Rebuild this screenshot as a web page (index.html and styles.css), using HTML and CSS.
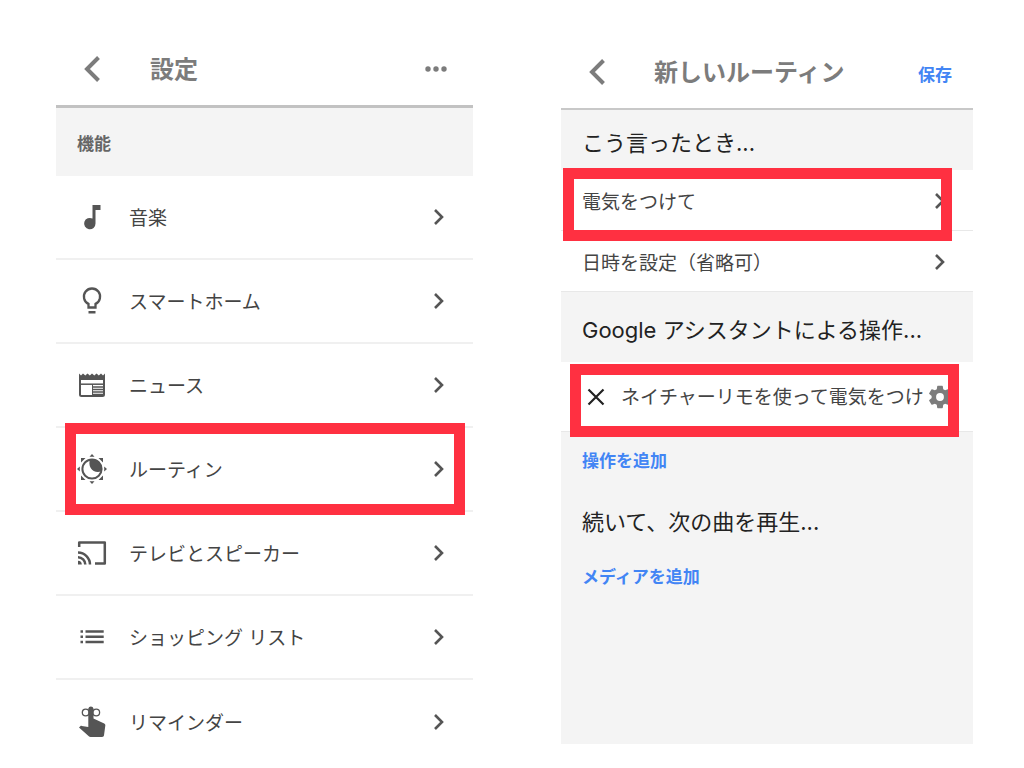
FILE: index.html
```html
<!DOCTYPE html>
<html lang="ja">
<head>
<meta charset="utf-8">
<meta name="viewport" content="width=device-width, initial-scale=1">
<title>設定</title>
<link rel="stylesheet" href="styles.css">
</head>
<body>
<svg class="defs" aria-hidden="true">
  <symbol id="back" viewBox="0 0 16 26"><path d="M14.500 1.500 3 13l11.500 11.500" fill="none" stroke="currentColor" stroke-width="4"/></symbol>
  <symbol id="next" viewBox="0 0 10 16"><path d="M1 1l7 7-7 7" fill="none" stroke="currentColor" stroke-width="2.600"/></symbol>
</svg>
<main class="screens">
  <section class="screen">
    <header class="bar">
      <button class="back" aria-label="戻る"><svg width="16" height="26"><use href="#back"/></svg></button>
      <h1 class="title">設定</h1>
      <button class="more" aria-label="その他"><svg width="22" height="6" viewBox="0 0 22 6" fill="currentColor"><circle cx="3" cy="3" r="2.700"/><circle cx="11" cy="3" r="2.700"/><circle cx="19" cy="3" r="2.700"/></svg></button>
    </header>
    <h2 class="group">機能</h2>
    <ul class="list">
      <li class="item"><a class="link" href="#music">
        <svg class="icon" viewBox="0 0 32 32" fill="currentColor"><path d="M16.500 4h8v5H19.500v13.500a5.700 5.700 0 1 1-3-4.900z"/></svg>
        <span class="label">音楽</span><svg class="next" width="10" height="16"><use href="#next"/></svg></a></li>
      <li class="item"><a class="link" href="#home">
        <svg class="icon" viewBox="0 0 32 32"><path d="M12.500 22.500v-3.600a8.100 8.100 0 1 1 7 0v3.600z" fill="none" stroke="currentColor" stroke-width="2.300"/><path d="M12.500 26h7v2.500h-7z" fill="currentColor"/></svg>
        <span class="label">スマートホーム</span><svg class="next" width="10" height="16"><use href="#next"/></svg></a></li>
      <li class="item"><a class="link" href="#news">
        <svg class="icon" viewBox="0 0 32 32"><path d="M3 4.500l2 2 2-2 2.300 2 2.200-2 2.300 2 2.200-2 2.300 2 2.200-2 2.300 2 2.200-2 2 2 2-2V11H3z" fill="currentColor"/><rect x="4" y="9" width="24" height="18" rx="1.500" fill="none" stroke="currentColor" stroke-width="2"/><path d="M4 15.200h24" stroke="currentColor" stroke-width="1.500"/><path d="M16.500 15v12" stroke="currentColor"/><path d="M17 18h11M17 20.500h11M17 23h11M17 25.500h11" stroke="currentColor" stroke-width="1.300"/></svg>
        <span class="label">ニュース</span><svg class="next" width="10" height="16"><use href="#next"/></svg></a></li>
      <li class="item marked"><a class="link" href="#routine">
        <svg class="icon" viewBox="0 0 32 32" fill="currentColor"><circle cx="16" cy="16" r="9.600" fill="none" stroke="currentColor" stroke-width="2"/><path d="M14 6.500c3-.8 7 .2 9.500 3.200 2 2.400 2.700 5.600 1.800 8.600-4 1.700-8.500.2-10.600-3.400-1.500-2.500-1.700-5.700-.7-8.400zM16 1l2.500 2.800h-5zM16 31l2.500-2.800h-5zM1 16l2.800-2.500v5zM31 16l-2.800-2.500v5zM5 5h4.500L5 9.500zM27 5h-4.500l4.500 4.500zM5 27h4.500L5 22.500zM27 27h-4.500l4.500-4.500z"/></svg>
        <span class="label">ルーティン</span><svg class="next" width="10" height="16"><use href="#next"/></svg></a></li>
      <li class="item"><a class="link" href="#tv">
        <svg class="icon" viewBox="0 0 32 32" fill="none" stroke="currentColor" stroke-width="2.500"><path d="M3.200 10V5.500h25.600v21H19" stroke-linejoin="round"/><path d="M2 15.500A12 12 0 0 1 14 27.500M2 20.200a7.300 7.300 0 0 1 7.300 7.300"/><path d="M2 23.700a3.800 3.800 0 0 1 3.800 3.800H2z" fill="currentColor" stroke="none"/></svg>
        <span class="label">テレビとスピーカー</span><svg class="next" width="10" height="16"><use href="#next"/></svg></a></li>
      <li class="item"><a class="link" href="#shopping">
        <svg class="icon" viewBox="0 0 32 32" stroke="currentColor" stroke-width="2.500"><path d="M4.500 10.500H7M4.500 15.700H7M4.500 21H7M9.500 10.500h18.200M9.500 15.700h18.200M9.500 21h18.200"/></svg>
        <span class="label">ショッピング リスト</span><svg class="next" width="10" height="16"><use href="#next"/></svg></a></li>
      <li class="item"><a class="link" href="#reminder">
        <svg class="icon" viewBox="0 0 32 32" fill="currentColor"><path d="M12.300 2.500a2.700 2.700 0 0 1 5.200 0V12.500l10.700 5c.9.400 1.300 1.300 1.100 2.200L28 29.300c-.1 1-.9 1.700-1.900 1.700H14.500c-.7 0-1.200-.2-1.700-.7L3 21.500l1.300-1.200c.4-.4.900-.5 1.500-.4l6.500 1z"/><circle cx="9.700" cy="6.500" r="3.400" fill="none" stroke="currentColor" stroke-width="1.300"/><circle cx="20.200" cy="6.500" r="3.400" fill="none" stroke="currentColor" stroke-width="1.300"/></svg>
        <span class="label">リマインダー</span><svg class="next" width="10" height="16"><use href="#next"/></svg></a></li>
    </ul>
  </section>

  <section class="screen routine">
    <header class="bar">
      <button class="back" aria-label="戻る"><svg width="16" height="26"><use href="#back"/></svg></button>
      <h1 class="title">新しいルーティン</h1>
      <button class="action save">保存</button>
    </header>
    <h2 class="heading first">こう言ったとき...</h2>
    <div class="row marked phrase"><a class="link" href="#phrase"><span class="label">電気をつけて</span><svg class="next" width="10" height="16"><use href="#next"/></svg></a></div>
    <div class="row"><a class="link" href="#time"><span class="label">日時を設定（省略可）</span><svg class="next" width="10" height="16"><use href="#next"/></svg></a></div>
    <h2 class="heading">Google アシスタントによる操作...</h2>
    <div class="row marked task">
      <button class="remove" aria-label="削除"><svg width="18" height="18" viewBox="0 0 18 18"><path d="M1.500 1.500l15 15M16.500 1.500l-15 15" stroke="currentColor" stroke-width="2.200"/></svg></button>
      <span class="label">ネイチャーリモを使って電気をつけ</span>
      <button class="gear" aria-label="操作の設定"><svg width="28" height="28" viewBox="0 0 20 20" fill="currentColor"><path d="M15.950 10.780c.030-.25.050-.51.050-.78s-.020-.53-.060-.78l1.690-1.320c.15-.12.190-.34.100-.51l-1.600-2.770c-.1-.18-.31-.24-.49-.18l-1.990.8c-.42-.32-.86-.58-1.350-.78L12 2.340c-.030-.2-.2-.34-.4-.34H8.400c-.2 0-.36.140-.39.340l-.3 2.120c-.49.200-.94.470-1.350.78l-1.990-.8c-.18-.070-.39 0-.49.180l-1.600 2.770c-.1.180-.060.390.1.510l1.690 1.320c-.040.250-.070.520-.070.780s.020.530.060.780L2.370 12.100c-.15.120-.19.340-.1.510l1.600 2.770c.1.180.31.240.49.180l1.990-.8c.42.320.86.580 1.350.78l.3 2.120c.040.200.2.340.4.340h3.200c.2 0 .37-.14.390-.34l.3-2.120c.49-.2.940-.47 1.350-.78l1.990.8c.18.070.39 0 .49-.18l1.600-2.770c.1-.18.060-.39-.1-.51zM10 12.800a2.800 2.800 0 1 1 0-5.600 2.800 2.800 0 0 1 0 5.600z"/></svg></button>
    </div>
    <div class="footer">
      <button class="action">操作を追加</button>
      <h2 class="subheading">続いて、次の曲を再生...</h2>
      <button class="action">メディアを追加</button>
    </div>
  </section>
</main>
</body>
</html>
```
FILE: styles.css
```css
* { box-sizing: border-box; }

body {
  margin: 0;
  background: #fff;
  color: #444;
  font-family: Inter, "Noto Sans CJK JP", sans-serif;
  font-size: 19px;
  line-height: 28px;
}

h1, h2, ul { margin: 0; padding: 0; }
ul { list-style: none; }
svg { display: block; flex: none; }
.defs { position: absolute; width: 0; height: 0; }

button {
  margin: 0;
  padding: 0;
  border: 0;
  background: none;
  color: inherit;
  font: inherit;
  cursor: pointer;
}

.screens {
  display: grid;
  grid-template-columns: 417fr 412fr;
  gap: 88px;
  align-items: start;
  padding: 32px 51px 0 56px;
}

.bar {
  display: flex;
  align-items: center;
  height: 76px;
  padding: 0 26px 0 28px;
  border-bottom: 3px solid #c2c2c2;
  color: #7c7c7c;
}

.title {
  flex: 1;
  margin-left: 50px;
  padding-top: 2px;
  font-size: 24px;
  font-weight: 700;
  line-height: 36px;
}

.group {
  padding: 22px 21px 18px;
  background: #f4f4f4;
  color: #666;
  font-size: 17px;
  font-weight: 700;
}

.item { position: relative; height: 84px; border-bottom: 2px solid #f0f0f0; }
.item:last-child { border-bottom: 0; }

.link {
  display: flex;
  align-items: center;
  height: 100%;
  color: inherit;
  text-decoration: none;
}

.item .link { padding: 0 29px 0 20px; }
.icon { width: 32px; height: 32px; color: #555; }
.item .label { margin-left: 21px; }
.label { flex: 1; padding-top: 3px; white-space: nowrap; }
.next { color: #555; }

.marked { position: relative; }
.marked::after {
  content: "";
  position: absolute;
  border: 11px solid #ff3041;
  pointer-events: none;
}
.item.marked::after { inset: -5px 8px -5px 9px; }

.routine { background: #f4f4f4; }
.routine .bar {
  height: 78px;
  padding: 3px 21px 0 28px;
  border-bottom: 2px solid #c8c8c8;
  background: #fff;
}
.routine .title { margin-left: 49px; }

.action {
  color: #4285f4;
  font-size: 17px;
  font-weight: 700;
  line-height: 28px;
}
.save { padding-top: 6px; }

.heading, .subheading {
  color: #222;
  font-size: 22px;
  font-weight: 400;
  line-height: 32px;
}
.heading { padding: 22px 21px 16px; }
.heading.first { padding: 17px 21px 11px; }
.subheading { padding-top: 6px; }

.row {
  height: 61px;
  border-bottom: 1px solid #e8e8e8;
  background: #fff;
}
.row .link { padding: 2px 28px 0 21px; }
.phrase::after { inset: -2px 21px -11px 2px; }

.task {
  display: flex;
  align-items: center;
  height: 70px;
  padding: 0 19px 0 26px;
}
.task .label { margin-left: 16px; }
.task::after { inset: 2px 14px -6px 9px; }
.remove { color: #222; }
.gear { color: #7c7c7c; }

.footer {
  display: flex;
  flex-direction: column;
  align-items: flex-start;
  gap: 25px;
  padding: 15px 21px 153px;
}
```
